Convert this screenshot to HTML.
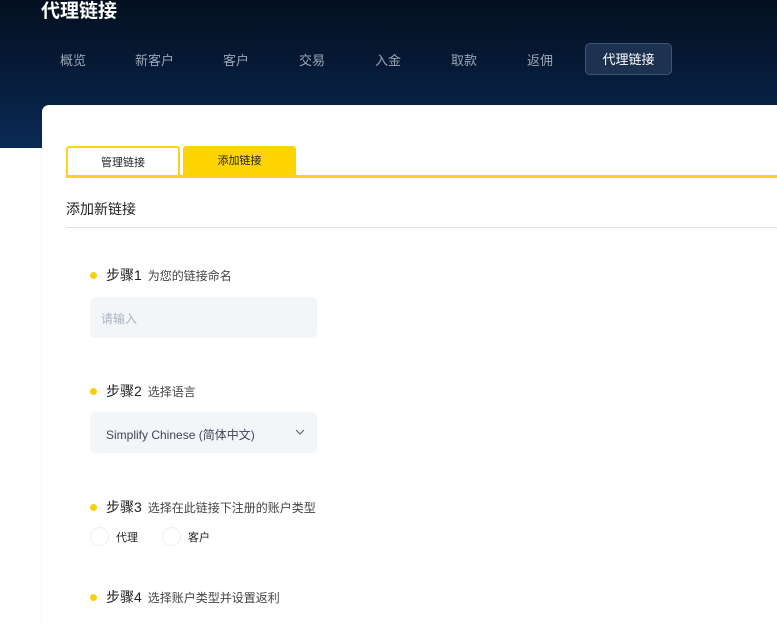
<!DOCTYPE html>
<html><head><meta charset="utf-8"><style>
*{margin:0;padding:0;box-sizing:border-box}
body{width:777px;height:600px;overflow:hidden;background:#fff;font-family:"Liberation Sans","Noto Sans CJK SC",sans-serif;position:relative}
.hdr{position:absolute;left:0;top:0;width:777px;height:148px;background:linear-gradient(180deg,#04101f 0%,#061a36 45%,#0a2a56 100%)}
.title{position:absolute;left:41px;top:-4px;color:#fff;font-size:19px;font-weight:bold}
.nav{position:absolute;top:50px;font-size:13px;color:#9aa6b6}
.act{position:absolute;left:585px;top:43px;width:87px;height:32px;border:1px solid #3f5573;border-radius:5px;background:#1d3150;color:#fff;font-size:13px;text-align:center;line-height:31px}
.card{position:absolute;left:42px;top:105px;width:760px;height:520px;background:#fff;border-radius:7px 0 0 0;box-shadow:0 0 3px rgba(0,0,0,.08)}
.tab{position:absolute;top:146px;height:30px;font-size:11px;text-align:center;line-height:31px;color:#222}
.line{position:absolute;left:66px;top:175px;width:711px;height:3px;background:#f9d31c}
.h{position:absolute;left:66px;top:199px;font-size:14px;color:#222}
.hl{position:absolute;left:66px;top:227px;width:711px;height:1px;background:#e3e3e3}
.step{position:absolute;left:90px;font-size:13px;color:#222}
.step:before{content:"";position:absolute;left:0;top:7px;width:7px;height:7px;border-radius:50%;background:#f9cf0c}
.step b{font-weight:normal;margin-left:16px;font-size:14px}
.step span{margin-left:6px;color:#444;font-size:12px}
.inp{position:absolute;left:90px;width:227px;height:41px;background:#f3f6f9;border-radius:5px;font-size:12px}
.rad{position:absolute;top:527px;width:19px;height:19px;border:1px solid #eee;border-radius:50%}
.rl{position:absolute;top:529px;font-size:11px;color:#222}
</style></head><body>
<div class="hdr"></div>
<div class="title">代理链接</div>
<div class="nav" style="left:60px">概览</div>
<div class="nav" style="left:135px">新客户</div>
<div class="nav" style="left:223px">客户</div>
<div class="nav" style="left:299px">交易</div>
<div class="nav" style="left:375px">入金</div>
<div class="nav" style="left:451px">取款</div>
<div class="nav" style="left:527px">返佣</div>
<div class="act">代理链接</div>
<div class="card"></div>
<div class="tab" style="left:66px;width:114px;border:2px solid #f9d31c;border-bottom:none;border-radius:3px 3px 0 0">管理链接</div>
<div class="tab" style="left:183px;width:113px;background:#fed400;border-radius:3px 3px 0 0">添加链接</div>
<div class="line"></div>
<div class="h">添加新链接</div>
<div class="hl"></div>
<div class="step" style="top:265px"><b>步骤1</b><span>为您的链接命名</span></div>
<div class="inp" style="top:297px;color:#aab3bf;padding:13px 11px">请输入</div>
<div class="step" style="top:381px"><b>步骤2</b><span>选择语言</span></div>
<div class="inp" style="top:412px;color:#445;padding:14px 16px">Simplify Chinese (简体中文)<svg style="position:absolute;left:205px;top:17px" width="10" height="6" viewBox="0 0 10 6"><path d="M1 1l4 4 4-4" fill="none" stroke="#667" stroke-width="1.2"/></svg></div>
<div class="step" style="top:497px"><b>步骤3</b><span>选择在此链接下注册的账户类型</span></div>
<div class="rad" style="left:90px"></div><div class="rl" style="left:116px">代理</div>
<div class="rad" style="left:162px"></div><div class="rl" style="left:188px">客户</div>
<div class="step" style="top:587px"><b>步骤4</b><span>选择账户类型并设置返利</span></div>
</body></html>
